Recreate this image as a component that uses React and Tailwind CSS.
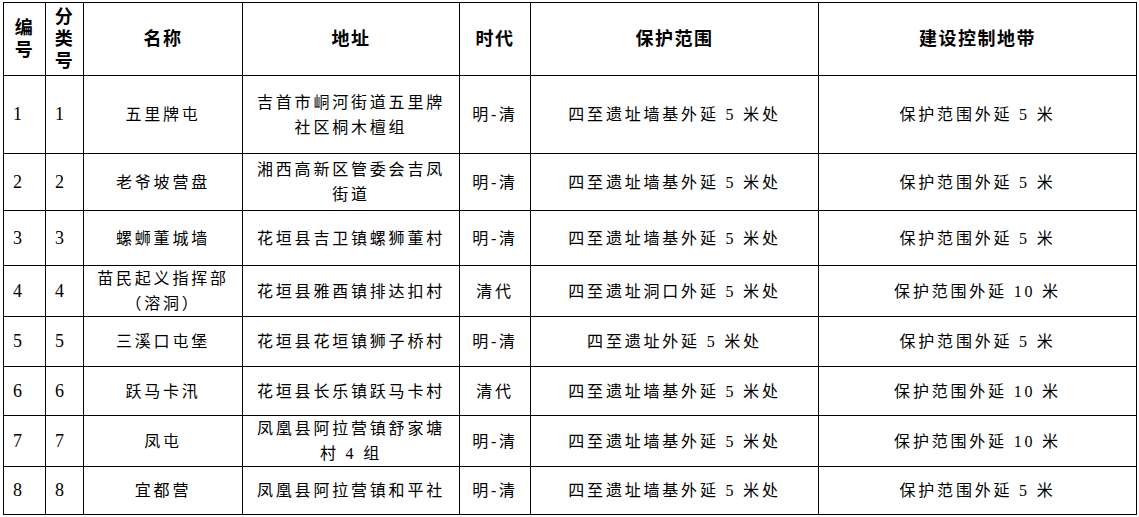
import React from 'react';

const rows = [
  { no: '1', cat: '1', name: ['五里牌屯'], addr: ['吉首市峒河街道五里牌', '社区桐木檀组'], era: '明-清', range: '四至遗址墙基外延 5 米处', zone: '保护范围外延 5 米', h: 'h-[78px]' },
  { no: '2', cat: '2', name: ['老爷坡营盘'], addr: ['湘西高新区管委会吉凤', '街道'], era: '明-清', range: '四至遗址墙基外延 5 米处', zone: '保护范围外延 5 米', h: 'h-[57px]' },
  { no: '3', cat: '3', name: ['螺蛳董城墙'], addr: ['花垣县吉卫镇螺狮董村'], era: '明-清', range: '四至遗址墙基外延 5 米处', zone: '保护范围外延 5 米', h: 'h-[55px]' },
  { no: '4', cat: '4', name: ['苗民起义指挥部', '（溶洞）'], addr: ['花垣县雅酉镇排达扣村'], era: '清代', range: '四至遗址洞口外延 5 米处', zone: '保护范围外延 10 米', h: 'h-[51px]' },
  { no: '5', cat: '5', name: ['三溪口屯堡'], addr: ['花垣县花垣镇狮子桥村'], era: '明-清', range: '四至遗址外延 5 米处', zone: '保护范围外延 5 米', h: 'h-[50px]' },
  { no: '6', cat: '6', name: ['跃马卡汛'], addr: ['花垣县长乐镇跃马卡村'], era: '清代', range: '四至遗址墙基外延 5 米处', zone: '保护范围外延 10 米', h: 'h-[49px]' },
  { no: '7', cat: '7', name: ['凤屯'], addr: ['凤凰县阿拉营镇舒家塘', '村 4 组'], era: '明-清', range: '四至遗址墙基外延 5 米处', zone: '保护范围外延 10 米', h: 'h-[51px]' },
  { no: '8', cat: '8', name: ['宜都营'], addr: ['凤凰县阿拉营镇和平社'], era: '明-清', range: '四至遗址墙基外延 5 米处', zone: '保护范围外延 5 米', h: 'h-[48px]' },
];

const Lines = ({ items }) => items.map((t, i) => <div key={i}>{t}</div>);

export default function App() {
  const th = 'border border-black font-bold text-[18px] leading-[22px] tracking-[1.5px] text-center align-middle p-0';
  const td = 'border border-black text-center align-middle p-0 text-[16px] leading-[25px] tracking-[2.8px]';
  const num = 'border border-black align-middle text-left pl-[9px] text-[18px] leading-[25px]';

  return (
    <div
      className="w-[1139px] h-[517px] bg-white pl-[3px] pt-[2px] text-black"
      style={{ fontFamily: '"Liberation Serif", "Noto Sans CJK SC", serif' }}
    >
      <table className="table-fixed border-collapse w-[1133px]">
        <colgroup>
          <col className="w-[42px]" />
          <col className="w-[38px]" />
          <col className="w-[159px]" />
          <col className="w-[217px]" />
          <col className="w-[71px]" />
          <col className="w-[288px]" />
          <col className="w-[318px]" />
        </colgroup>
        <thead>
          <tr className="h-[73px]">
            <th className={th}>编<br />号</th>
            <th className={th}>分<br />类<br />号</th>
            <th className={th}>名称</th>
            <th className={th}>地址</th>
            <th className={th}>时代</th>
            <th className={th}>保护范围</th>
            <th className={th}>建设控制地带</th>
          </tr>
        </thead>
        <tbody>
          {rows.map((r) => (
            <tr key={r.no} className={r.h}>
              <td className={num}>{r.no}</td>
              <td className={num}>{r.cat}</td>
              <td className={td}><Lines items={r.name} /></td>
              <td className={td}><Lines items={r.addr} /></td>
              <td className={td + ' tracking-[0px]'}>{r.era}</td>
              <td className={td}>{r.range}</td>
              <td className={td}>{r.zone}</td>
            </tr>
          ))}
        </tbody>
      </table>
    </div>
  );
}
